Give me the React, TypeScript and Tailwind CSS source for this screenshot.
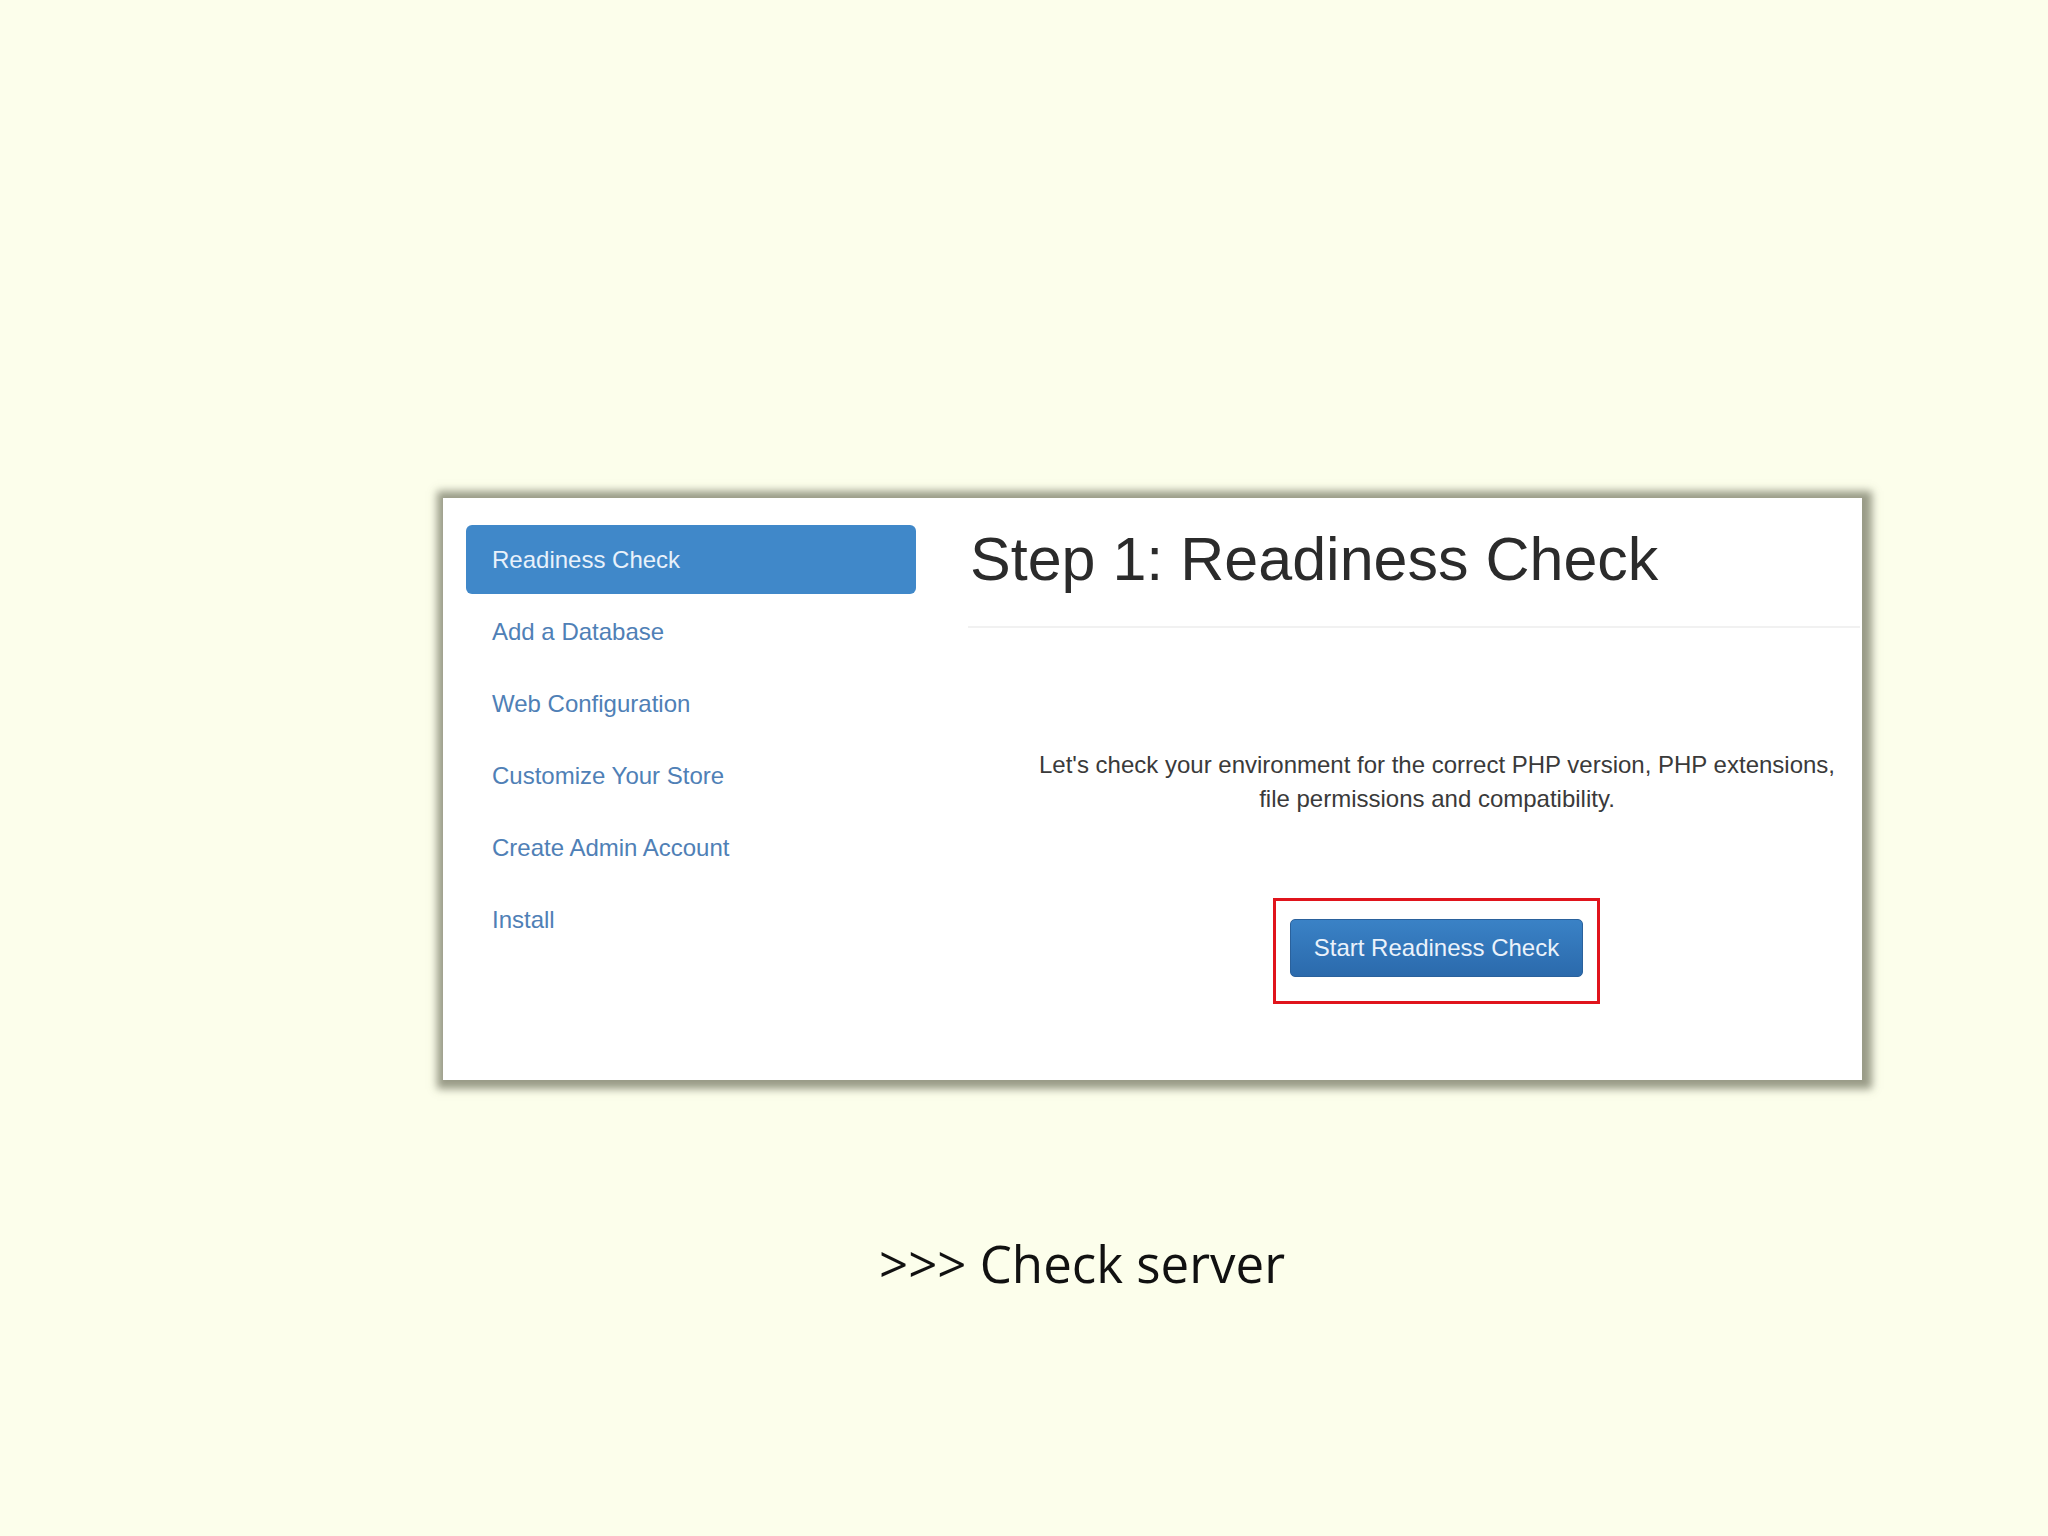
const steps = [
  "Readiness Check",
  "Add a Database",
  "Web Configuration",
  "Customize Your Store",
  "Create Admin Account",
  "Install",
];

function StepNav() {
  return (
    <ul className="flex w-[450px] flex-col gap-[3px]">
      {steps.map((label, i) => (
        <li
          key={label}
          className={
            i === 0
              ? "flex h-[69px] items-center rounded-[6px] bg-[#4088c9] pl-[26px] text-[24px] text-[#e8f1fb]"
              : "flex h-[69px] items-center pl-[26px] text-[24px] text-[#4f80b6]"
          }
        >
          {label}
        </li>
      ))}
    </ul>
  );
}

function ReadinessPanel() {
  return (
    <div className="flex-1 pt-[4px]">
      <h1 className="pl-[2px] text-[61px] leading-none text-[#2b2b2b]">Step 1: Readiness Check</h1>
      <div className="mt-[36px] h-[2px] bg-[#f1f1f1]"></div>
      <p className="mt-[120px] ml-[59px] w-[820px] text-center text-[24px] leading-[34px] text-[#3a3a3a]">
        Let's check your environment for the correct PHP version, PHP extensions, file permissions and
        compatibility.
      </p>
      <div className="mt-[82px] ml-[305px] inline-block border-[3px] border-[#e0141c] px-[14px] pt-[18px] pb-[24px]">
        <button className="h-[58px] w-[293px] rounded-[5px] border border-[#2a619c] bg-gradient-to-b from-[#3a82c6] to-[#2b6aac] text-[24px] text-[#eaf2fb]">
          Start Readiness Check
        </button>
      </div>
    </div>
  );
}

export default function App() {
  return (
    <div
      className="h-screen w-full overflow-hidden bg-[#fcfeeb] pt-[498px]"
      style={{ fontFamily: '"Liberation Sans", Arial, sans-serif' }}
    >
      <div className="ml-[443px] flex h-[582px] w-[1419px] gap-[52px] bg-white pt-[27px] pl-[23px] pr-[2px] shadow-[2px_1px_8px_8px_rgba(135,137,118,0.85)]">
        <StepNav />
        <ReadinessPanel />
      </div>
      <p
        className="mt-[158px] ml-[879px] text-[51px] leading-none text-[#111]"
        style={{ fontFamily: '"Open Sans", "Noto Sans", sans-serif' }}
      >
        &gt;&gt;&gt; Check server
      </p>
    </div>
  );
}
